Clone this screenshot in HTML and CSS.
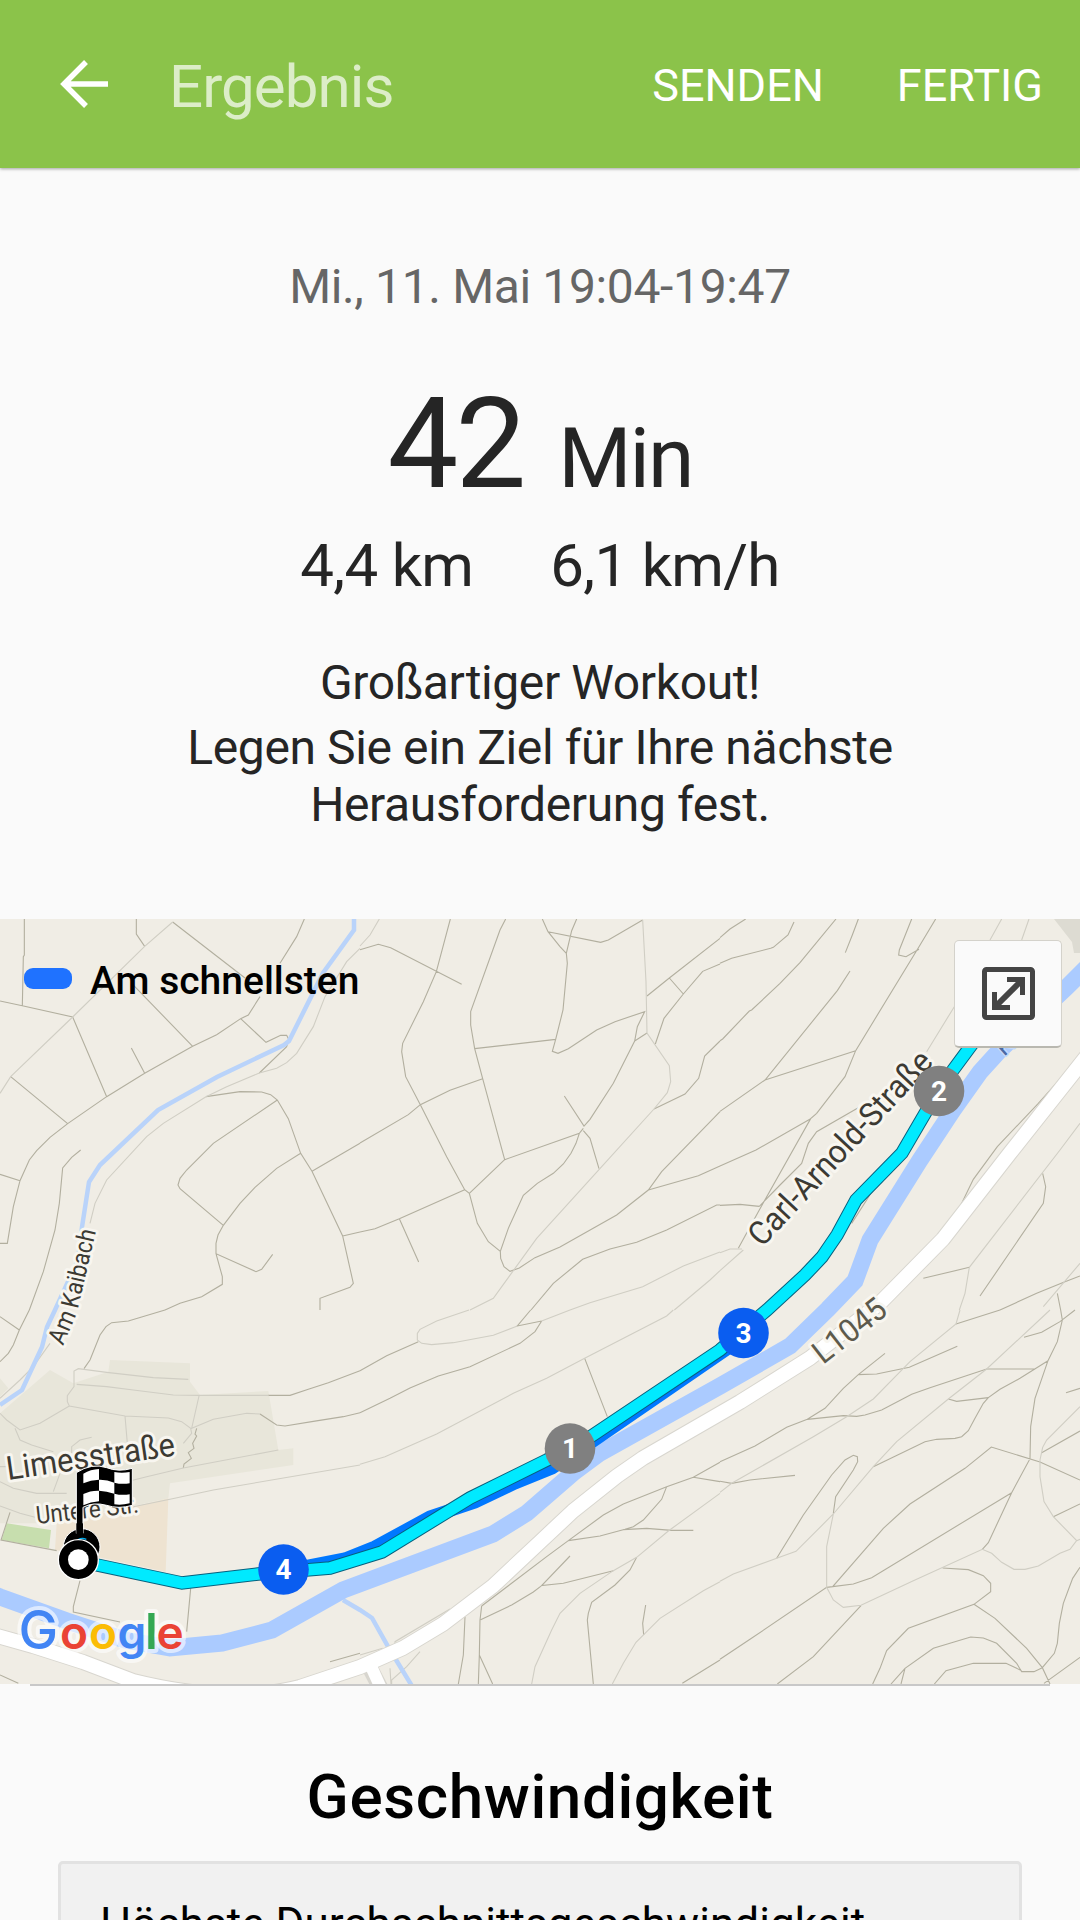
FILE: index.html
```html
<!DOCTYPE html>
<html lang="de">
<head>
    <meta charset="UTF-8">
    <meta name="viewport" content="width=device-width, initial-scale=1.0">
    <title>Ergebnis</title>
    <link rel="stylesheet" href="styles.css">
</head>
<body>
    <header class="topbar">
        <svg class="back" viewBox="0 0 48 48" width="48" height="48">
            <path d="M48 24H4M26 2L4 24L26 46" fill="none" stroke="#fff" stroke-width="5.5"/>
        </svg>
        <h1>Ergebnis</h1>
        <span class="action send">SENDEN</span>
        <span class="action done">FERTIG</span>
    </header>

    <section class="summary">
        <div class="date">Mi., 11. Mai 19:04-19:47</div>
        <div class="duration"><span class="value">42</span><span class="unit">Min</span></div>
        <div class="stats"><span class="distance">4,4 km</span><span class="pace">6,1 km/h</span></div>
        <p class="praise">Großartiger Workout!</p>
        <p class="goal">Legen Sie ein Ziel für Ihre nächste<br>Herausforderung fest.</p>
    </section>

    <section class="map">
        <svg class="canvas" viewBox="0 919 1080 765" width="1080" height="765">
            <!-- built-up areas -->
            <g transform="translate(0 1310) scale(.33333)">
                <path fill="#e8e6da" d="M330 150L570 160V215L600 255L805 243L835 420L880 415V465L510 520L505 565L390 590L160 640H0V310L150 180L220 220L325 185Z"/>
                <path fill="#e8e6da" d="M0 205L25 235L0 260Z"/>
                <path fill="#eee3d1" d="M505 565L497 785L290 740L165 720L170 640L400 590Z"/>
                <path fill="#c7deae" d="M20 640L153 660L147 715L5 690Z"/>
            </g>
            <path fill="#dddbd2" d="M1054 919H1080V953H1074L1072 942Z"/>

            <!-- footpaths, one group per tile -->
            <g class="path" transform="translate(0 910) scale(.33333)">
                <path d="M73 27V135L70 140L67 287M0 273L67 287L218 321L320 560M409 27V72L434 109M518 36L735 204M395 220L578 409M913 27L890 80L840 160M780 260L745 315L722 326L650 374L578 409L434 490L320 560L203 641L150 682L110 722L88 750L60 812L40 890L22 1000H0M722 326L798 397L842 376H860L866 388L860 410L778 489M394 414L434 490M32 500L203 641M0 793L60 812M242 720L215 742L188 774L178 880L165 960L130 1085L88 1200"/>
                <path d="M618 560L720 545L785 546L812 554L832 570L865 626L902 730L936 784L1028 978L1060 1120L1050 1132L960 1165V1200M832 570L640 700L560 780L540 805L534 825L540 836L670 946M902 730L830 775L765 832L720 880L670 946L654 975L648 1000V1031L768 1085L785 1078L818 1033M648 1031L667 1100V1123L605 1160L540 1180L495 1200M936 784L1080 700M1028 978L1080 966"/>
                <path class="faint" d="M518 36L434 109L218 321L32 500L0 550M1080 115L1040 155L975 260L940 350L890 430L860 458L830 475L778 489L680 530L618 560L490 640L440 680L320 810L285 880L270 940"/>
            </g>
            <g class="path" transform="translate(360 910) scale(.33333)">
                <path d="M0 119L55 103L92 113L305 223M271 27L229 185L190 275L128 400L125 425L137 500L181 584L260 740L314 839L328 850L352 940L385 995L421 1024M437 27L420 60L332 305V345L344 416L368 506L434 749M344 416L587 388M368 506L270 541L181 584L145 614L0 699M434 749L328 850M314 839L118 926L45 956L0 966M118 926L176 1056M434 749L658 670L670 655M547 27L564 65L600 110L619 130M650 27L635 62L619 130L622 160L609 300L587 388L577 424L594 430L625 416L710 360L765 335L854 305L832 350L824 393L760 520L690 628L672 648L613 558M564 65L722 97L745 90L848 30M824 393L861 369M658 670L648 700L633 730L610 762L580 790L532 820L490 856L445 955L421 1024L422 1045L432 1070L450 1084L478 1074L525 1043L600 1011L770 915L865 840L905 785L1080 605M670 662L690 685L717 776M865 840L1015 797L1080 768"/>
                <path d="M861 258L928 204L1080 85M928 204L970 252M1080 162L1028 184L970 252L912 325L886 402M1080 393L1034 438L1016 505L975 552L882 597M513 1200L580 1120L668 1048L750 1017L830 997L920 960L1070 885H1080"/>
                <path class="faint" d="M58 27L30 75L0 108M848 30L858 215L861 369L928 467L932 515L922 548L882 597L717 779L530 985L400 1165L330 1200M630 1200L690 1178L848 1130L970 1068L1080 1026M943 1200L1050 1110L1080 1082"/>
            </g>
            <g class="path" transform="translate(720 910) scale(.33333)">
                <path d="M0 83L30 57L77 27M222 36L204 75L160 112L152 115L35 145L0 160M348 27L240 158L180 220L95 300L88 303L8 387L0 392M415 27L397 75L376 128M390 183L352 242L135 510L0 604M135 510L407 422M575 27L538 120L536 135L558 140L597 118M647 27L597 110L407 422L375 500L290 610L272 626L115 905L55 1015M272 626L108 720L0 768M0 886L60 883L118 889M118 889L180 825L245 760L265 700L290 665L420 590"/>
                <path d="M1080 440L955 580L832 710L760 808L720 890L665 965L658 985M968 790L977 830L970 880L780 1158M610 1105L748 1072M1080 1098L1033 1116L950 1150L840 1200M1012 1150L1022 1200M480 805L440 870L395 940"/>
                <path class="faint" d="M845 27L810 90M927 27L905 90M703 290L620 425M0 1028L30 1017H66M0 1082L70 1020M1080 640L1020 720L748 1072L735 1150L718 1200M1080 1060L970 1190"/>
            </g>
            <g class="path" transform="translate(0 1310) scale(.33333)">
                <path d="M88 0L58 60L40 105L25 130L0 155M0 20L58 60M495 0L385 33L335 38L318 50L300 75L270 150L252 176M1080 182L985 218L925 238L870 256H805M1080 308L1030 320L940 334L855 348L830 345L780 312M30 607L3 690L170 722M240 812L220 890V906L360 936M572 835L560 965M0 1095L55 1120M990 1055L1080 1030"/>
                <path d="M590 355L585 372L590 378L578 400L582 415L565 428L574 445L552 462L550 474"/>
                <path class="faint" d="M805 256H595L520 255L400 240L320 230L230 223M565 208L460 203L320 187L235 176L222 183L222 230L202 257V275L208 288L375 318L505 324L545 335L572 355L575 370L550 400M208 288L120 340L60 360L20 330L0 310M45 355L60 390L95 405L160 425M275 382L240 390L215 410V430M375 318L382 400M597 258L575 355L640 328L740 310L780 312M150 100L100 170L60 210L0 265M835 420L550 474L440 500L380 515L340 530M1080 465L640 540L510 568L400 590M180 490L160 545M0 515L40 535L110 550L200 550M0 588L60 610L105 622M0 470H30"/>
            </g>
            <g class="path" transform="translate(360 1310) scale(.33333)">
                <path d="M0 182L80 137L175 95M0 308L90 265L150 234L235 198L330 170L480 100L525 65L545 33M512 0L472 48L545 33M674 145L742 320M1080 457L1000 502L920 530L790 582L730 615L625 692L560 740L365 888M1000 502L1080 515M920 530L905 568L850 630L820 650L795 658L720 678L625 692M790 659L860 655L935 661H1000M630 738L545 827L610 820L760 782M545 827L520 846L455 885L362 929M830 742L810 780L765 825L695 877L685 910L682 930L700 1122M857 885L848 940L851 975M365 888L360 930L358 1035L355 1122M358 1035L398 1122M315 920L310 1035L295 1122M1080 1050L967 1120"/>
                <path class="faint" d="M327 0L230 33L180 58L172 70V90L185 100L215 104L280 98L400 76L472 48M545 33L630 0M940 0L920 18L674 145L560 205L460 250L230 372L75 440L0 463M1080 550L925 663L830 742L760 782L660 850L600 910L575 960L525 1070L515 1122M1080 815L1030 842L900 925L828 997L790 1060L757 1122M270 897L105 995V1010M0 1035L68 1015M180 1025L140 1070L95 1110V1122M90 1075L93 1122"/>
            </g>
            <g class="path" transform="translate(720 1310) scale(.33333)">
                <path d="M0 455L105 408L200 352L262 328L315 295L370 235L415 194L495 130M415 194L470 192L568 172L712 109M262 328L370 317L410 319L435 315L485 300L575 253L630 233L800 177H945M708 42L840 0M1022 0L1027 30L1012 95L984 152L945 265L932 350L930 446L875 548L805 698L787 718M912 82L965 67L1020 35L1065 0M984 152L900 205L840 238L805 263L790 280L765 325L745 362L725 380L705 385L650 388L615 395L460 470M685 267L710 274L805 263M1080 510L960 456L814 411L735 475L570 582L490 655L338 830L320 832L90 988L0 1048M875 548L455 803L400 822L338 830M170 745L250 615L335 495L375 450L400 436L412 440L413 455L400 480L347 560L340 610M0 514L35 520L90 510L225 496M1038 248L1080 235M1080 363L965 428M1080 582L1000 620M668 774L745 779L790 797L812 820V845L762 883L565 955L500 1022L480 1075L458 1122M762 883L825 925L920 1015L967 1073L990 1122M967 1073L1003 1030L1012 1000L1018 940L1030 880L1058 805L1080 772M967 1073L942 1085H905L890 1060L830 1000L790 984L752 981L640 1015L555 1075L513 1122M905 1082L858 1060H760L678 1082L643 1122M555 1075L543 1122M423 887L280 1040L172 1122M1080 1042L972 1120"/>
                <path class="faint" d="M720 0L708 42L570 155L460 267L380 320L280 380L35 520L0 547M990 0L800 177L685 267L530 395L460 470L340 612L228 724L170 745L40 792L0 814M340 612L320 710V832L340 870L370 892L423 886L580 812L787 718L815 730L845 757L882 778H915L955 768L1020 730L1050 718L1070 692L1000 620L972 575L960 500V450L968 412L980 390L1080 290M1070 692L1080 688"/>
            </g>

            <!-- water -->
            <path class="stream" d="M354 917V930L323 973L289 1041L284 1045L217 1077L158 1110L100 1165L89 1182L82 1227L78 1260L55 1310L47 1327L42 1347L22 1390L0 1405"/>
            <path class="stream" d="M343 1600L360 1610L372 1618L390 1650L412 1686"/>
            <path class="river" d="M-10 1593L0 1597L67 1621L125 1640L170 1648L222 1643L272 1630L343 1590L493 1534L527 1513L573 1473L600 1453L720 1386L790 1346L828 1309L855 1281L870 1240L920 1160L953 1110L980 1072L1000 1050L1067 987L1090 964"/>

            <!-- main road -->
            <path class="road-edge" d="M-10 1634L33 1646L83 1662L133 1681Q230 1705 300 1687L360 1667L403 1648L443 1624L493 1586L540 1542L573 1511L617 1476L643 1458L740 1402L810 1358L880 1303L943 1239L1010 1153L1090 1052"/>
            <path class="road-edge branch" d="M370 1668L384 1695"/>
            <path class="road" d="M-10 1634L33 1646L83 1662L133 1681Q230 1705 300 1687L360 1667L403 1648L443 1624L493 1586L540 1542L573 1511L617 1476L643 1458L740 1402L810 1358L880 1303L943 1239L1010 1153L1090 1052"/>
            <path class="road branch" d="M370 1664L384 1695"/>

            <!-- street names -->
            <defs>
                <path id="kaibach" d="M63 1346L77 1313L87 1270L97 1227"/>
            </defs>
            <text class="label" font-size="25"><textPath href="#kaibach" textLength="120" lengthAdjust="spacingAndGlyphs">Am Kaibach</textPath></text>
            <text class="label" font-size="33" textLength="170" lengthAdjust="spacingAndGlyphs" transform="translate(8 1480) rotate(-8.3)">Limesstraße</text>
            <text class="label" font-size="25" textLength="103" lengthAdjust="spacingAndGlyphs" transform="translate(37 1524) rotate(-6.5)">Untere Str.</text>
            <text class="label" font-size="33" textLength="253" lengthAdjust="spacingAndGlyphs" transform="translate(762 1248) rotate(-47)">Carl-Arnold-Straße</text>
            <text class="label ref" font-size="32" textLength="84" lengthAdjust="spacingAndGlyphs" transform="translate(823 1365) rotate(-38)">L1045</text>
            <text class="label water" font-size="26" transform="translate(1004 1057) rotate(-42)">Ka</text>

            <!-- route, fastest stretch below -->
            <path class="fast" d="M283 1571L308 1566L345 1559L375 1547L430 1517L475 1502L515 1483L552 1468L590 1443L743 1338"/>
            <path class="route-edge" d="M78 1560L97 1565L182 1583L258 1574L330 1568L382 1552L470 1498L547 1460L590 1437L720 1350L767 1310L805 1275L822 1257L837 1235L856 1200L902 1153L927 1110L953 1070L973 1043L1000 1010"/>
            <path class="route" d="M78 1560L97 1565L182 1583L258 1574L330 1568L382 1552L470 1498L547 1460L590 1437L720 1350L767 1310L805 1275L822 1257L837 1235L856 1200L902 1153L927 1110L953 1070L973 1043L1000 1010"/>

            <!-- kilometre markers -->
            <g class="marker">
                <circle cx="939" cy="1091" r="25.3" fill="#808080"/>
                <text x="939" y="1100.500">2</text>
                <circle cx="570" cy="1448.500" r="25.3" fill="#808080"/>
                <text x="570" y="1457.500">1</text>
                <circle cx="743.500" cy="1333" r="25.3" fill="#0a5df0"/>
                <text x="743.500" y="1342.500">3</text>
                <circle cx="283.500" cy="1569.500" r="25.3" fill="#0a5df0"/>
                <text x="283.500" y="1578.500">4</text>
            </g>

            <!-- finish flag and start point -->
            <g transform="translate(0 1310) scale(.33333)">
                <circle cx="245" cy="711" r="55" stroke="#fff" stroke-width="3"/>
                <path d="M229 670V488Q275 458 320 473Q355 487 397 475V586Q355 598 320 586Q280 575 249 592V670Z" stroke="#fff" stroke-width="3"/>
                <path d="M229 640H249V690H229Z"/>
                <path fill="#fff" d="M250 491Q272 478 297 477V509Q272 510 250 520ZM343 486Q365 491 389 486V520Q365 524 343 518ZM297 509Q320 508 343 518V551Q320 543 297 542ZM250 552Q272 541 297 542V574Q272 576 250 586ZM343 551Q365 557 389 553V580Q365 586 343 583Z"/>
                <path d="M236 688Q247 683 259 688" fill="none" stroke="#00a8e8" stroke-width="4"/>
                <circle cx="235" cy="749" r="60" stroke="#fff" stroke-width="4"/>
                <circle cx="235" cy="749" r="31" fill="#fff"/>
            </g>

            <text class="logo" y="1649"><tspan class="cap" x="18.500" fill="#4285f4">G</tspan><tspan x="60" fill="#ea4335">o</tspan><tspan x="89" fill="#fbbc05">o</tspan><tspan x="117.500" fill="#4285f4">g</tspan><tspan class="tall" x="145" fill="#34a853">l</tspan><tspan x="156.500" fill="#ea4335">e</tspan></text>
        </svg>

        <div class="legend"><span class="swatch"></span>Am schnellsten</div>

        <div class="expand">
            <svg viewBox="0 0 53 53" width="53" height="53">
                <rect x="2.500" y="2.500" width="48" height="48" rx="2" fill="none" stroke="#444" stroke-width="5"/>
                <path d="M15 38L38 15" stroke="#444" stroke-width="6"/>
                <path d="M25 12.500H40.500V28M12.500 25V40.500H28" fill="none" stroke="#444" stroke-width="5"/>
            </svg>
        </div>
    </section>

    <section class="speed">
        <h2>Geschwindigkeit</h2>
        <div class="card">Höchste Durchschnittsgeschwindigkeit</div>
    </section>
</body>
</html>
```
FILE: styles.css
```css
body {
    font-family: Roboto, sans-serif;
    margin: 0;
    width: 1080px;
    height: 1920px;
    overflow: hidden;
    background-color: #fafafa;
    color: #252525;
}
h1, h2, p {
    margin: 0;
    font-weight: normal;
}
.topbar {
    display: flex;
    align-items: center;
    height: 164px;
    padding: 4px 37px 0 60px;
    width: 983px;
    background-color: #8bc34a;
    box-shadow: 0 1px 3px rgba(0, 0, 0, 0.35);
    color: #fff;
}
.back {
    margin-top: -4px;
}
.topbar h1 {
    margin-left: 61px;
    font-size: 60px;
    letter-spacing: -0.9px;
    color: #dcedc8;
}
.action {
    margin-top: -2px;
    font-size: 45px;
}
.send {
    margin-left: auto;
}
.done {
    margin-left: 73px;
}
.summary {
    height: 751px;
    padding-top: 89px;
    box-sizing: border-box;
    text-align: center;
}
.date {
    font-size: 48px;
    line-height: 60px;
    letter-spacing: -0.35px;
    color: #666;
}
.duration {
    margin-top: 67px;
    line-height: 120px;
    height: 120px;
}
.value {
    font-size: 126px;
    letter-spacing: -3px;
}
.unit {
    margin-left: 35px;
    font-size: 84px;
    letter-spacing: -2px;
}
.stats {
    display: flex;
    justify-content: center;
    gap: 77px;
    margin-top: 27px;
    font-size: 60px;
    line-height: 70px;
    letter-spacing: -0.7px;
}
.praise, .goal {
    font-size: 48px;
    line-height: 57px;
    letter-spacing: -0.38px;
}
.praise {
    margin-top: 53px;
}
.goal {
    margin-top: 8px;
}
.map {
    position: relative;
    height: 765px;
    background-color: #f0ede5;
}
.canvas {
    display: block;
}
.path path {
    fill: none;
    stroke: #b2af9f;
    stroke-width: 1.1px;
    vector-effect: non-scaling-stroke;
}
.path .faint {
    stroke: #d0cec4;
}
.stream, .river, .road, .road-edge, .route, .route-edge, .fast {
    fill: none;
}
.stream {
    stroke: #b9d3fa;
    stroke-width: 4.5px;
}
.river {
    stroke: #abcbff;
    stroke-width: 17px;
}
.road {
    stroke: #fff;
    stroke-width: 14px;
    stroke-linejoin: round;
}
.road-edge {
    stroke: #d8d6cf;
    stroke-width: 16px;
    stroke-linejoin: round;
}
.road.branch {
    stroke-width: 12px;
}
.route-edge {
    stroke: #06607e;
    stroke-width: 13.5px;
}
.route {
    stroke: #00eaff;
    stroke-width: 11.5px;
}
.fast {
    stroke: #0078ff;
    stroke-width: 13px;
}
.label {
    fill: #3c3a33;
    stroke: #f8f6f0;
    stroke-width: 6px;
    stroke-linejoin: round;
    paint-order: stroke;
}
.label.ref {
    fill: #5d5a4c;
}
.label.water {
    fill: #4a6aa5;
    stroke: #c4d9fb;
    stroke-width: 3px;
}
.marker text {
    fill: #fff;
    font-size: 28px;
    font-weight: bold;
    text-anchor: middle;
}
.logo {
    font-family: Inter, sans-serif;
    font-size: 46px;
    font-weight: 600;
    stroke: rgba(255, 255, 255, 0.6);
    stroke-width: 8px;
    stroke-linejoin: round;
    paint-order: stroke;
}
.logo .cap {
    font-size: 53px;
    font-weight: 500;
}
.logo .tall {
    font-size: 49px;
}
.legend {
    position: absolute;
    left: 24px;
    top: 37px;
    display: flex;
    align-items: center;
    font-size: 39px;
    font-weight: 500;
    line-height: 50px;
    color: #000;
}
.swatch {
    width: 48px;
    height: 21px;
    margin-right: 18px;
    margin-top: -5px;
    border-radius: 9px;
    background-color: #1f72ff;
}
.expand {
    position: absolute;
    left: 954px;
    top: 21px;
    display: flex;
    align-items: center;
    justify-content: center;
    width: 108px;
    height: 108px;
    box-sizing: border-box;
    border: 1px solid #d4d2cb;
    border-bottom: 2px solid #b9b8b0;
    border-radius: 5px;
    background-color: #fafafa;
}
.speed {
    height: 236px;
    padding: 0 58px;
    overflow: hidden;
}
.speed::before {
    content: "";
    display: block;
    height: 2px;
    margin: 0 -28px;
    background-color: #c8c8c8;
}
.speed h2 {
    margin-top: 71px;
    font-size: 62px;
    font-weight: 500;
    line-height: 80px;
    letter-spacing: 0.6px;
    text-align: center;
    color: #000;
}
.card {
    height: 200px;
    margin-top: 24px;
    padding: 30px 39px;
    border: 3px solid #e2e2e2;
    border-radius: 5px;
    background-color: #f1f1f1;
    font-size: 44px;
    line-height: 60px;
    letter-spacing: 0.06px;
    white-space: nowrap;
    color: #000;
}
```
